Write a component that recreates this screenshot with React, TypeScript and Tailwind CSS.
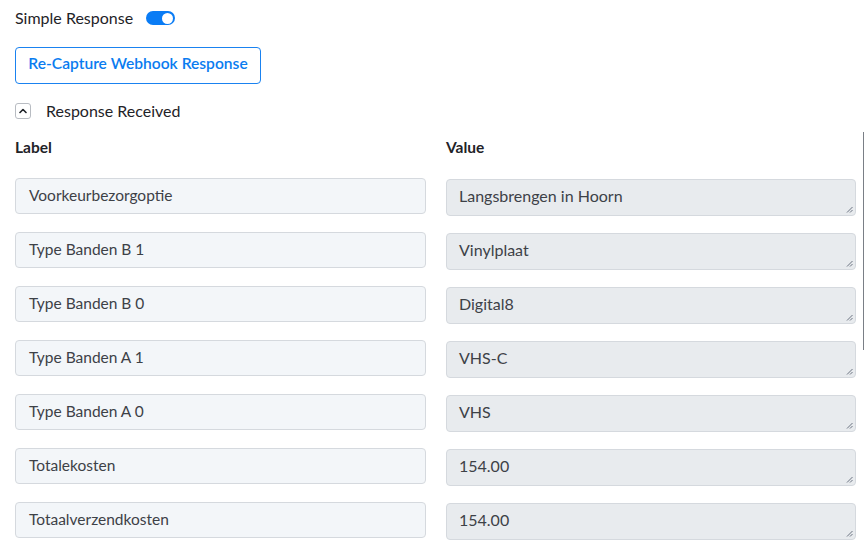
import React from "react";

const rows: [string, string][] = [
  ["Voorkeurbezorgoptie", "Langsbrengen in Hoorn"],
  ["Type Banden B 1", "Vinylplaat"],
  ["Type Banden B 0", "Digital8"],
  ["Type Banden A 1", "VHS-C"],
  ["Type Banden A 0", "VHS"],
  ["Totalekosten", "154.00"],
  ["Totaalverzendkosten", "154.00"],
];

function ResizeGrip() {
  return (
    <svg className="absolute right-[2px] bottom-[2px]" width="7" height="7" viewBox="0 0 7 7">
      <path d="M6.5 1 L1 6.5 M6.5 4 L4 6.5" stroke="#6b7280" strokeWidth="1" fill="none" />
    </svg>
  );
}

export default function App() {
  return (
    <div
      className="relative h-[554px] w-[865px] overflow-hidden bg-white text-[#1f2328]"
      style={{ fontFamily: "Lato, 'Noto Sans', sans-serif" }}
    >
      <div className="flex flex-col px-[15px] pt-[8px]">
        <div className="flex h-[20px] items-center gap-[13px]">
          <span className="text-[16px]">Simple Response</span>
          <span className="relative inline-flex h-[14px] w-[29px] items-center rounded-full bg-[#0a7cf5]">
            <span className="absolute right-[2px] h-[11px] w-[11px] rounded-full bg-white" />
          </span>
        </div>

        <button className="mt-[19px] flex h-[37px] w-[246px] items-center justify-center rounded-[4px] border border-[#1a82f0] bg-white pb-[4px] text-[15.6px] font-semibold text-[#0a7cf0]">
          Re-Capture Webhook Response
        </button>

        <div className="mt-[17px] flex h-[20px] items-center gap-[15px]">
          <span className="flex h-[16px] w-[16px] items-center justify-center rounded-[3px] border border-[#b8bcc2]">
            <svg width="8" height="6" viewBox="0 0 8 6">
              <path d="M1 4.5 L4 1.5 L7 4.5" stroke="#1f2328" strokeWidth="1.6" fill="none" strokeLinecap="round" strokeLinejoin="round" />
            </svg>
          </span>
          <span className="text-[16px]">Response Received</span>
        </div>

        <div className="mt-[16px] grid grid-cols-[411px_410px] gap-x-[20px]">
          <div className="text-[15.5px] font-bold leading-[20px]">Label</div>
          <div className="text-[15.5px] font-bold leading-[20px]">Value</div>
        </div>

        <div className="mt-[21px] flex flex-col gap-[16px]">
          {rows.map(([label, value], i) => (
            <div key={i} className="grid grid-cols-[411px_410px] gap-x-[20px]">
              <div className="flex h-[36px] items-center rounded-[4px] border border-[#d5d9de] bg-[#f3f6f9] px-[13px] pb-[1px] text-[15.5px] text-[#3d4147]">
                {label}
              </div>
              <div className="relative mt-[1px] flex h-[37px] items-start rounded-[4px] border border-[#d5d9de] bg-[#e8ebee] px-[12px] pt-[4px] text-[16px] text-[#3d4147]">
                {value}
                <ResizeGrip />
              </div>
            </div>
          ))}
        </div>
      </div>

      <div className="absolute right-[1px] top-[132px] h-[218px] w-[1.5px] bg-[#7a7f86]" />
    </div>
  );
}
